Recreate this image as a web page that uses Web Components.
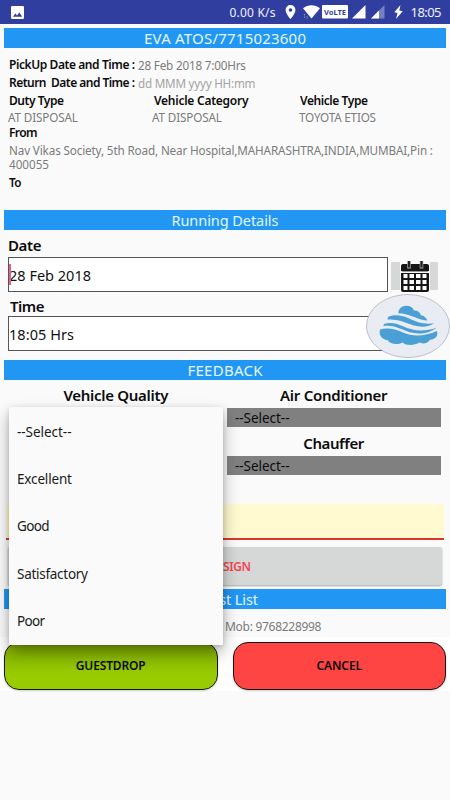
<!DOCTYPE html>
<html lang="en">
<head>
<meta charset="utf-8">
<title>Duty</title>
<style>
*{ box-sizing: border-box; }
body{
	margin: 0;
	width: 450px;
	height: 800px;
	overflow: hidden;
	background: #fafafa;
	font-family: "Noto Sans", "Open Sans", sans-serif;
	color: #111;
}
</style>
</head>
<body>
<duty-screen></duty-screen>
<script>
// one line of text, its letters spaced to fill the given width
class TextLine extends HTMLElement{
	connectedCallback(){
		if(this.shadowRoot) return
		this.attachShadow({ mode: "open" })
		this.shadowRoot.innerHTML = `
			<style>
			:host{ display: block; white-space: pre; font-size: ${this.getAttribute('size')}px; }
			:host([bold]){ font-weight: 600; color: #0c0c0c; }
			:host([soft]){ color: #7b7b7b; }
			span{ display: inline-block; }
			</style>
			<span><slot></slot></span>
		`.trim().replace(/>\s+<span/, '><span')
		const span = this.shadowRoot.querySelector('span')
		const width = Number(this.getAttribute('width'))
		const count = this.textContent.length - 1
		if(width && count > 0){
			const gap = (width - span.getBoundingClientRect().width) / count
			span.style.letterSpacing = gap + 'px'
			span.style.marginRight = -gap + 'px'
		}
	}
}

class StatusBar extends HTMLElement{
	constructor(){
		super()
		this.attachShadow({ mode: "open" })
		this.shadowRoot.innerHTML = `
			<style>
			:host{ display: block; height: 23.5px; background: #303f9f; color: #fff; }
			.bar{ display: flex; align-items: center; height: 24px; padding: 0 8.5px 0 11px; }
			svg{ display: block; flex: none; }
			text-line{ line-height: 25px; color: #f1f2fa; }
			.speed{ margin-left: auto; margin-right: 9px; }
			</style>
			<div class="bar">
				<svg width="13" height="13" viewBox="0 0 13 13"><rect width="13" height="13" rx="1.3" fill="#fff"/><path d="M2 10.7 4.3 7.5 6 9.5 8.3 6.5 11.2 10.7z" fill="#303f9f"/></svg>
				<text-line class="speed" size="12" width="46">0.00 K/s</text-line>
				<svg width="11" height="14" viewBox="0 0 11 14"><path fill="#fff" fill-rule="evenodd" d="M5.5 0A4.9 4.9 0 0 0 .6 4.9C.6 8.5 5.5 14 5.5 14s4.9-5.5 4.9-9.1A4.9 4.9 0 0 0 5.5 0zm0 3.2a1.8 1.8 0 1 1 0 3.6 1.8 1.8 0 0 1 0-3.6z"/></svg>
				<svg style="margin-left:7px" width="17" height="14" viewBox="0 0 17 14"><path fill="#fff" d="M0 3.3C5 -.7 12 -.7 17 3.3L8.5 13.5z"/><path stroke="#8089c5" stroke-width="1.2" stroke-dasharray="1.5 1" d="M1.5 9v5M4 11v3"/></svg>
				<svg style="margin-left:2px" width="26" height="14" viewBox="0 0 26 14"><rect width="26" height="13.5" rx="1" fill="#fff"/><text x="2" y="9.6" font-size="7.5" font-weight="700" fill="#303f9f" textLength="22" lengthAdjust="spacingAndGlyphs">VoLTE</text></svg>
				<svg style="margin-left:4px" width="14" height="14" viewBox="0 0 14 14"><path fill="#fff" d="M0 13.5 13.5 0v13.5z"/></svg>
				<svg style="margin-left:5px" width="14" height="14" viewBox="0 0 14 14"><path fill="#7680bf" d="M0 13.5 13.5 0v13.5z"/><path fill="#fff" d="M0 13.5 8 5.5v8z"/></svg>
				<svg style="margin-left:9px;margin-right:8px" width="9" height="14" viewBox="0 0 9 14"><path fill="#fff" d="M6.5 0 .3 7.2l3.2.8L2 14l6.7-7.8-3.4-.8z"/></svg>
				<text-line size="13" width="31">18:05</text-line>
			</div>
		`
	}
}

class SectionBar extends HTMLElement{
	connectedCallback(){
		if(this.shadowRoot) return
		this.attachShadow({ mode: "open" })
		this.shadowRoot.innerHTML = `
			<style>
			:host{ display: flex; justify-content: center; height: 20.3px; margin: 0 4px; background: #2196f3; color: #e4f6ff; }
			text-line{ line-height: 21px; }
			</style>
			<text-line size="${this.getAttribute('size') || 15}" width="${this.getAttribute('width')}">${this.textContent}</text-line>
		`
	}
}

class EntryField extends HTMLElement{
	constructor(){
		super()
		this.attachShadow({ mode: "open" })
		this.shadowRoot.innerHTML = `
			<style>
			:host{ display: block; position: relative; width: 380px; height: 35px; background: #fff; border: 1px solid #555; box-sizing: border-box; line-height: 34px; }
			.caret{ position: absolute; left: 0; top: 6px; width: 2px; height: 21px; background: #e6608f; display: none; }
			:host([focused]) .caret{ display: block; }
			</style>
			<div class="caret"></div>
			<slot></slot>
		`
	}
}

class SelectBox extends HTMLElement{
	constructor(){
		super()
		this.attachShadow({ mode: "open" })
		this.shadowRoot.innerHTML = `
			<style>
			:host{ display: block; height: 19.5px; padding-left: 8px; background: #808080; line-height: 21px; color: #0c0c0c; }
			</style>
			<text-line size="13.5" width="54.5">--Select--</text-line>
		`
	}
}

class CalendarButton extends HTMLElement{
	constructor(){
		super()
		this.attachShadow({ mode: "open" })
		this.shadowRoot.innerHTML = `
			<style>
			:host{ display: flex; justify-content: center; align-items: center; width: 47px; height: 28px; background: #d6d7d7; border-radius: 1px; }
			svg{ flex: none; background: #fafafa; padding: 0 .5px; }
			</style>
			<svg width="29" height="31" viewBox="0 0 28 31">
				<path fill="#161616" d="M2 3h24q2 0 2 2v5H0V5q0-2 2-2zM0 12h28v17q0 2-2 2H2q-2 0-2-2z"/>
				<path stroke="#aaa" stroke-width="3.6" d="M8 0v7.5M20.5 0v7.5"/>
				<path stroke="#222" stroke-width="2.2" d="M8 0v6.5M20.5 0v6.5"/>
				<path stroke="#999" d="M1 10.5h26"/>
				<path fill="#fff" d="M2.500 13h4v4h-4zM8.500 13h4.500v4H8.500zM15 13h4.500v4H15zM21.500 13h4v4h-4zM2.500 19h4v4h-4zM8.500 19h4.500v4H8.500zM15 19h4.500v4H15zM21.500 19h4v4h-4zM2.500 25h4v4h-4zM8.500 25h4.500v4H8.500zM15 25h4.500v4H15zM21.500 25h4v4h-4z"/>
			</svg>
		`
	}
}

class CloudBadge extends HTMLElement{
	constructor(){
		super()
		this.attachShadow({ mode: "open" })
		this.shadowRoot.innerHTML = `
			<style>
			:host{ display: block; width: 84px; height: 64px; }
			svg{ display: block; }
			</style>
			<svg width="84" height="64" viewBox="0 0 84 64">
				<ellipse cx="42" cy="32" rx="41.5" ry="31.5" fill="#e9edf3" stroke="#b0b0c4" stroke-width=".8"/>
				<g fill="#4a9fd5">
					<path d="M32.3 19.2C32.5 14.5 36 11.8 40.5 11.8C44 11.8 47 13.8 48 16.6C51 16.3 54 18 55 21.2C58 21.5 60 23.5 61.5 26.5C57 26.3 53 24.8 49 23.2C43 20.8 38 19.4 32.3 19.2z"/>
					<path d="M22 23C27 20.3 35 20.7 42 24C49 27.4 58 31 68 29.3C62 33.8 53 33.5 45 30.6C37 27.5 30 24.6 21.5 25.6z"/>
					<path d="M18 30C24 27.9 30 28.9 37 32.3C46 36.7 58 38.3 70.5 33.7C62 40.6 50 40.6 41 37.3C33 34 26 30.5 17.3 32z"/>
					<path d="M14 35.6C21 33.3 29 34.8 37 38.6C47 43 59 42.3 71 37C72.5 42 69 45.6 64 45.8C62 49.3 57 50.3 53.5 48.6C48 52 40 51.7 36.5 48.5C31 51.5 24 50 21.5 46C16 46 12.5 41 14 35.6z"/>
				</g>
			</svg>
		`
	}
}

class ActionButton extends HTMLElement{
	constructor(){
		super()
		this.attachShadow({ mode: "open" })
		this.shadowRoot.innerHTML = `
			<style>
			:host{ display: flex; justify-content: center; box-sizing: border-box; width: 213.5px; height: 47.5px; border: 1px solid #161616; border-radius: 15px; background: var(--fill); line-height: 46px; box-shadow: 0 1px 2px #0003; }
			</style>
			<slot></slot>
		`
	}
}

class OptionMenu extends HTMLElement{
	constructor(){
		super()
		this.attachShadow({ mode: "open" })
		this.shadowRoot.innerHTML = `
			<style>
			:host{ display: block; box-sizing: border-box; width: 214px; height: 238px; padding: 1.5px 8px 0; background: #fafafa; border-radius: 1px; box-shadow: 0 8px 16px rgba(0,0,0,.32), 0 1px 4px rgba(0,0,0,.15); line-height: 47.4px; color: #1a1a1a; }
			</style>
			<slot></slot>
		`
	}
}

class DutyScreen extends HTMLElement{
	constructor(){
		super()
		this.attachShadow({ mode: "open" })
		this.shadowRoot.innerHTML = `
			<style>
			*{ box-sizing: border-box; }
			:host{ display: flex; flex-direction: column; position: relative; height: 800px; }
			:host > *{ flex: none; }
			.details{ padding: 8px 8px 0 9px; height: 161.4px; line-height: 18px; }
			.pair{ display: flex; gap: 3px; }
			.cols{ display: grid; grid-template-columns: 145px 147px 1fr; line-height: 16px; padding-top: 1px; }
			.cols text-line[soft]{ margin-left: -1px; }
			.address{ line-height: 14px; padding: 3px 0 2px; }
			.running{ height: 129.7px; padding: 3px 8px 0; }
			.label{ line-height: 24px; }
			.label.time{ height: 24.5px; line-height: 28px; margin-left: 2px; }
			.row{ display: flex; gap: 3px; align-items: center; height: 35px; }
			calendar-button{ margin-top: 4px; }
			.feedback{ display: grid; grid-template-columns: 214px 213.5px; column-gap: 4px; padding: 4.5px 9px 0; height: 123.7px; }
			.rating text-line{ display: flex; justify-content: center; height: 23.5px; line-height: 23.5px; }
			.rating select-box{ margin-bottom: 5px; }
			.remark{ height: 36px; margin: 0 6px; background: #fffad0; border-bottom: 2px solid #d6382e; }
			.sign{ display: flex; justify-content: center; height: 38px; margin: 7px 8px 4px; background: #d6d7d7; border-radius: 2px; box-shadow: 0 1px 2px #0005; line-height: 39px; }
			.sign text-line{ color: #f04850; margin-left: 24px; }
			.guest{ height: 28px; padding-left: 225px; line-height: 36px; }
			.actions{ display: flex; justify-content: space-between; height: 54px; padding: 5.2px 4px 0; background: #fff; }
			cloud-badge{ position: absolute; left: 366px; top: 293.5px; }
			option-menu{ position: absolute; left: 9px; top: 407px; }
			</style>
			<status-bar></status-bar>
			<section-bar style="margin-top:4.5px" width="162" size="15">EVA ATOS/7715023600</section-bar>
			<div class="details">
				<div class="pair"><text-line bold size="12" width="126">PickUp Date and Time :</text-line><text-line soft size="11.7" width="108">28 Feb 2018 7:00Hrs</text-line></div>
				<div class="pair"><text-line bold size="12" width="126">Return  Date and Time :</text-line><text-line soft size="11.7" width="117.5" style="color:#a3a3a3">dd MMM yyyy HH:mm</text-line></div>
				<div class="cols">
					<text-line bold size="12" width="55">Duty Type</text-line>
					<text-line bold size="12" width="94.5">Vehicle Category</text-line>
					<text-line bold size="12" width="68" style="margin-left:-1px">Vehicle Type</text-line>
					<text-line soft size="11.7" width="70">AT DISPOSAL</text-line>
					<text-line soft size="11.7" width="70" style="margin-left:-2px">AT DISPOSAL</text-line>
					<text-line soft size="11.7" width="77" style="margin-left:-2px">TOYOTA ETIOS</text-line>
				</div>
				<text-line bold size="12" width="28.5" style="line-height:15px">From</text-line>
				<div class="address">
					<text-line soft size="11.7" width="424">Nav Vikas Society, 5th Road, Near Hospital,MAHARASHTRA,INDIA,MUMBAI,Pin :</text-line>
					<text-line soft size="11.7" width="40">400055</text-line>
				</div>
				<text-line bold size="11.7" width="12.5">To</text-line>
			</div>
			<section-bar width="107" size="14.5">Running Details</section-bar>
			<div class="running">
				<text-line class="label" bold size="15" width="33.5">Date</text-line>
				<div class="row">
					<entry-field focused><text-line size="14.5" width="82">28 Feb 2018</text-line></entry-field>
					<calendar-button></calendar-button>
				</div>
				<text-line class="label time" bold size="15" width="34.5">Time</text-line>
				<entry-field><text-line size="14.5" width="65">18:05 Hrs</text-line></entry-field>
			</div>
			<section-bar width="75" size="15">FEEDBACK</section-bar>
			<div class="feedback">
				<div class="rating">
					<text-line bold size="15" width="105">Vehicle Quality</text-line>
				</div>
				<div class="rating">
					<text-line bold size="15" width="107.5">Air Conditioner</text-line>
					<select-box></select-box>
					<text-line bold size="15" width="61">Chauffer</text-line>
					<select-box></select-box>
				</div>
			</div>
			<div class="remark"></div>
			<div class="sign"><text-line bold size="12" width="28">SIGN</text-line></div>
			<section-bar width="66" size="14.5">Guest List</section-bar>
			<div class="guest"><text-line soft size="12" width="96.5">Mob: 9768228998</text-line></div>
			<div class="actions">
				<action-button style="--fill:linear-gradient(#82ae00,#99cc00 70%)"><text-line bold size="12" width="70">GUESTDROP</text-line></action-button>
				<action-button style="--fill:#ff4444"><text-line bold size="12" width="45.5">CANCEL</text-line></action-button>
			</div>
			<cloud-badge></cloud-badge>
			<option-menu>
				<text-line size="13.5" width="54.5">--Select--</text-line>
				<text-line size="13.5" width="55">Excellent</text-line>
				<text-line size="13.5" width="32.5">Good</text-line>
				<text-line size="13.5" width="71">Satisfactory</text-line>
				<text-line size="13.5" width="28">Poor</text-line>
			</option-menu>
		`
	}
}

customElements.define("text-line", TextLine);
customElements.define("status-bar", StatusBar);
customElements.define("section-bar", SectionBar);
customElements.define("entry-field", EntryField);
customElements.define("select-box", SelectBox);
customElements.define("calendar-button", CalendarButton);
customElements.define("cloud-badge", CloudBadge);
customElements.define("action-button", ActionButton);
customElements.define("option-menu", OptionMenu);
customElements.define("duty-screen", DutyScreen);
</script>
</body>
</html>
